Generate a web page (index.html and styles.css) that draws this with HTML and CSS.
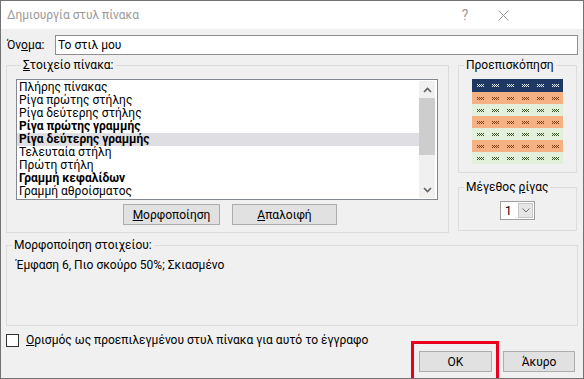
FILE: index.html
```html
<!DOCTYPE html>
<html>
<head>
    <meta charset="utf-8">
    <title>Δημιουργία στυλ πίνακα</title>
    <link rel="stylesheet" href="styles.css">
</head>
<body>
    <div class="window">
        <div class="titlebar">
            <span class="caption">Δημιουργία στυλ πίνακα</span>
            <span class="help">?</span>
            <span class="close">
                <svg width="11" height="11" viewBox="0 0 11 11"><path d="M0.5 0.5 L10.5 10.5 M10.5 0.5 L0.5 10.5" stroke="#9a9a9a" stroke-width="1"/></svg>
            </span>
        </div>

        <div class="content">
            <div class="name-row">
                <label class="name-label">Όν<u>ο</u>μα:</label>
                <div class="textbox">Το στιλ μου</div>
            </div>

            <div class="main">
                <fieldset class="group elements">
                    <legend><u>Σ</u>τοιχείο πίνακα:</legend>
                    <div class="listbox">
                        <ul class="items">
                            <li>Πλήρης πίνακας</li>
                            <li>Ρίγα πρώτης στήλης</li>
                            <li>Ρίγα δεύτερης στήλης</li>
                            <li class="bold">Ρίγα πρώτης γραμμής</li>
                            <li class="bold selected">Ρίγα δεύτερης γραμμής</li>
                            <li>Τελευταία στήλη</li>
                            <li>Πρώτη στήλη</li>
                            <li class="bold">Γραμμή κεφαλίδων</li>
                            <li>Γραμμή αθροίσματος</li>
                        </ul>
                        <div class="scrollbar">
                            <div class="arrow">
                                <svg width="9" height="6" viewBox="0 0 9 6"><path d="M1 5 L4.5 1.5 L8 5" fill="none" stroke="#606060" stroke-width="1.6"/></svg>
                            </div>
                            <div class="thumb"></div>
                            <div class="track"></div>
                            <div class="arrow">
                                <svg width="9" height="6" viewBox="0 0 9 6"><path d="M1 1 L4.5 4.5 L8 1" fill="none" stroke="#606060" stroke-width="1.6"/></svg>
                            </div>
                        </div>
                    </div>
                    <div class="actions">
                        <button class="btn btn-format"><u>Μ</u>ορφοποίηση</button>
                        <button class="btn btn-clear"><u>Α</u>παλοιφή</button>
                    </div>
                </fieldset>

                <div class="side">
                    <fieldset class="group preview">
                        <legend>Προεπισκόπηση</legend>
                        <svg class="preview-table" width="91" height="85" viewBox="0 0 91 85">
                            <defs>
                                <path id="dots" d="M0 0h1v1h-1z M2 0h1v1h-1z M4 0h1v1h-1z M6 0h1v1h-1z M1 1h1v1h-1z M3 1h1v1h-1z M5 1h1v1h-1z M0 2h1v1h-1z M2 2h1v1h-1z M4 2h1v1h-1z M6 2h1v1h-1z"/>
                                <pattern id="mark-white" x="0" y="0" width="15" height="13" patternUnits="userSpaceOnUse">
                                    <use href="#dots" x="5" y="5" fill="#e6e9f0"/>
                                </pattern>
                                <pattern id="mark-brown" x="0" y="13" width="15" height="12" patternUnits="userSpaceOnUse">
                                    <use href="#dots" x="5" y="5" fill="#843c0c"/>
                                </pattern>
                                <pattern id="mark-green" x="0" y="13" width="15" height="12" patternUnits="userSpaceOnUse">
                                    <use href="#dots" x="5" y="5" fill="#375623"/>
                                </pattern>
                            </defs>
                            <rect x="0" y="0" width="91" height="13" fill="#203864"/>
                            <rect x="0" y="13" width="91" height="12" fill="#f4b183"/>
                            <rect x="0" y="25" width="91" height="12" fill="#e2efda"/>
                            <rect x="0" y="37" width="91" height="12" fill="#f4b183"/>
                            <rect x="0" y="49" width="91" height="12" fill="#e2efda"/>
                            <rect x="0" y="61" width="91" height="12" fill="#f4b183"/>
                            <rect x="0" y="73" width="91" height="12" fill="#e2efda"/>
                            <rect x="0" y="0" width="91" height="13" fill="url(#mark-white)"/>
                            <rect x="0" y="13" width="91" height="12" fill="url(#mark-brown)"/>
                            <rect x="0" y="25" width="91" height="12" fill="url(#mark-green)"/>
                            <rect x="0" y="37" width="91" height="12" fill="url(#mark-brown)"/>
                            <rect x="0" y="49" width="91" height="12" fill="url(#mark-green)"/>
                            <rect x="0" y="61" width="91" height="12" fill="url(#mark-brown)"/>
                            <rect x="0" y="73" width="91" height="12" fill="url(#mark-green)"/>
                        </svg>
                    </fieldset>

                    <fieldset class="group stripe">
                        <legend>Μέγεθος <u>ρ</u>ίγας</legend>
                        <div class="combo">
                            <span class="combo-value">1</span>
                            <span class="combo-button">
                                <svg width="8" height="5" viewBox="0 0 8 5"><path d="M0.5 0.5 L4 4 L7.5 0.5" fill="none" stroke="#707070" stroke-width="1"/></svg>
                            </span>
                        </div>
                    </fieldset>
                </div>
            </div>

            <fieldset class="group format">
                <legend>Μορφοποίηση στοιχείου:</legend>
                <div class="format-text">Έμφαση 6, Πιο σκούρο 50%; Σκιασμένο</div>
            </fieldset>

            <div class="default-row">
                <span class="checkbox"></span>
                <span><u>Ο</u>ρισμός ως προεπιλεγμένου στυλ πίνακα για αυτό το έγγραφο</span>
            </div>

            <div class="footer">
                <div class="ok-wrap">
                    <button class="btn btn-ok">OK</button>
                </div>
                <button class="btn btn-cancel">Άκυρο</button>
            </div>
        </div>
    </div>
</body>
</html>
```

FILE: styles.css
```css
* {
    box-sizing: border-box;
}

body {
    margin: 0;
    font-family: Roboto, "Noto Sans", sans-serif;
    font-size: 12px;
    color: #000;
    background: #fff;
}

.window {
    width: 584px;
    height: 379px;
    border: 1px solid #737373;
    background: #f0f0f0;
    display: flex;
    flex-direction: column;
    overflow: hidden;
}

/* title bar */
.titlebar {
    height: 28px;
    flex-shrink: 0;
    background: #fff;
    display: flex;
    align-items: center;
    padding: 0 57px 0 6px;
    color: #9a9a9a;
}
.caption {
    flex: 1;
}
.help {
    width: 30px;
    text-align: center;
    font-size: 14px;
}
.close {
    width: 46px;
    display: flex;
    justify-content: center;
}

.content {
    flex: 1;
    display: flex;
    flex-direction: column;
    padding: 6px 5px 0 5px;
}

/* name */
.name-row {
    display: flex;
    align-items: center;
    height: 20px;
}
.name-label {
    width: 49px;
    padding-left: 1px;
}
.textbox {
    flex: 1;
    height: 20px;
    background: #fff;
    border: 1px solid #8f8f8f;
    padding-left: 2px;
    line-height: 18px;
}

/* group boxes */
.group {
    margin: 0;
    min-width: 0;
    border: 1px solid #dcdcdc;
}
.group legend {
    padding: 0 2px;
    line-height: 16px;
    margin-left: 5px;
}

.main {
    display: flex;
    margin-top: 2px;
}

.elements {
    width: 443px;
    padding: 6px 10px 7px 9px;
}

.listbox {
    height: 121px;
    display: flex;
    background: #fff;
    border: 1px solid #828790;
    padding: 1px 1px 1px 0;
}
.items {
    flex: 1;
    list-style: none;
    margin: 0;
    padding: 0;
}
.items li {
    height: 13px;
    line-height: 13px;
    padding-left: 2px;
    white-space: nowrap;
}
.items .bold {
    font-weight: bold;
}
.items .selected {
    background: #dedee3;
}

.scrollbar {
    width: 16px;
    margin-right: 1px;
    background: #f0f0f0;
    display: flex;
    flex-direction: column;
}
.scrollbar .arrow {
    height: 17px;
    display: flex;
    align-items: center;
    justify-content: center;
}
.scrollbar .thumb {
    height: 57px;
    background: #cdcdcd;
}
.scrollbar .track {
    flex: 1;
}

.actions {
    display: flex;
    justify-content: center;
    gap: 12px;
    margin-top: 4px;
    padding-left: 6px;
}

.btn {
    height: 21px;
    padding: 0;
    font-family: inherit;
    font-size: 12px;
    color: #000;
    background: #e1e1e1;
    border: 1px solid #adadad;
}
.btn-format {
    width: 97px;
}
.btn-clear {
    width: 105px;
}

/* right column */
.side {
    width: 119px;
    margin-left: 9px;
    display: flex;
    flex-direction: column;
}
.preview {
    padding: 6px 0 8px 0;
}
.preview-table {
    display: block;
    margin: 0 auto;
}
.stripe {
    margin-top: 6px;
    padding: 6px 0 10px 0;
}
.combo {
    width: 35px;
    height: 19px;
    margin: 0 auto;
    background: #fff;
    border: 1px solid #a0a0a0;
    display: flex;
    align-items: center;
    padding: 1px;
}
.combo-value {
    flex: 1;
    padding-left: 3px;
}
.combo-button {
    width: 15px;
    height: 15px;
    background: #e5e5e5;
    border: 1px solid #c8c8c8;
    display: flex;
    align-items: center;
    justify-content: center;
}

/* item format */
.format {
    margin-top: 4px;
    height: 89px;
    padding: 4px 0 0 0;
}
.format-text {
    line-height: 16px;
    padding-left: 9px;
}

.default-row {
    display: flex;
    align-items: center;
    gap: 7px;
    margin-top: 6px;
    height: 16px;
}
.checkbox {
    width: 13px;
    height: 13px;
    flex-shrink: 0;
    background: #fff;
    border: 1px solid #333;
}

.footer {
    display: flex;
    justify-content: flex-end;
    gap: 11px;
    margin-top: 3px;
    padding-right: 3px;
}
.ok-wrap {
    position: relative;
}
.ok-wrap::after {
    content: "";
    position: absolute;
    left: -8px;
    right: -7px;
    top: -10px;
    bottom: -9px;
    border: 3px solid #e8001c;
}
.btn-ok {
    width: 73px;
    display: block;
}
.btn-cancel {
    width: 72px;
}
```
